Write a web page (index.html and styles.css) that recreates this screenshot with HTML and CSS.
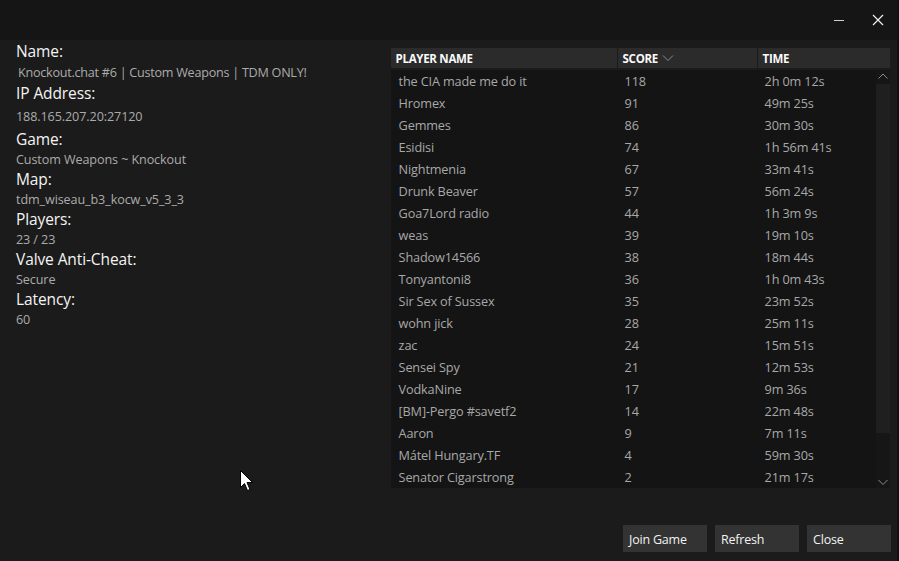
FILE: index.html
```html
<!DOCTYPE html>
<html lang="en">
<head>
    <meta charset="UTF-8" />
    <title>Server Info</title>
    <link rel="stylesheet" href="styles.css">
</head>
<body>

<div class="window">
    <div class="titlebar">
        <span class="tb-btn">
            <svg width="12" height="12" viewBox="0 0 12 12"><path d="M1 6.5h10" stroke="#d0d0d0" stroke-width="1"/></svg>
        </span>
        <span class="tb-btn">
            <svg width="12" height="12" viewBox="0 0 12 12"><path d="M1 1L11 11M11 1L1 11" stroke="#f0f0f0" stroke-width="1.2"/></svg>
        </span>
    </div>

    <div class="content">
        <div class="info">
            <div class="label">Name:</div>
            <div class="value v-name">&nbsp;Knockout.chat #6 | Custom Weapons | TDM ONLY!</div>
            <div class="label">IP Address:</div>
            <div class="value v-ip">188.165.207.20:27120</div>
            <div class="label">Game:</div>
            <div class="value">Custom Weapons ~ Knockout</div>
            <div class="label">Map:</div>
            <div class="value">tdm_wiseau_b3_kocw_v5_3_3</div>
            <div class="label">Players:</div>
            <div class="value">23 / 23</div>
            <div class="label">Valve Anti-Cheat:</div>
            <div class="value">Secure</div>
            <div class="label">Latency:</div>
            <div class="value">60</div>
        </div>

        <div class="players">
            <div class="thead">
                <div class="th c-name">PLAYER NAME</div>
                <div class="th c-score">SCORE
                    <svg class="sort" width="12" height="8" viewBox="0 0 12 8"><path d="M1 1.5L6 6.5L11 1.5" fill="none" stroke="#8a8a8a" stroke-width="1"/></svg>
                </div>
                <div class="th c-time">TIME</div>
            </div>
            <div class="tbody">
                <div class="rows">
                    <div class="row"><span class="c-name">the CIA made me do it</span><span class="c-score">118</span><span class="c-time">2h 0m 12s</span></div>
                    <div class="row"><span class="c-name">Hromex</span><span class="c-score">91</span><span class="c-time">49m 25s</span></div>
                    <div class="row"><span class="c-name">Gemmes</span><span class="c-score">86</span><span class="c-time">30m 30s</span></div>
                    <div class="row"><span class="c-name">Esidisi</span><span class="c-score">74</span><span class="c-time">1h 56m 41s</span></div>
                    <div class="row"><span class="c-name">Nightmenia</span><span class="c-score">67</span><span class="c-time">33m 41s</span></div>
                    <div class="row"><span class="c-name">Drunk Beaver</span><span class="c-score">57</span><span class="c-time">56m 24s</span></div>
                    <div class="row"><span class="c-name">Goa7Lord radio</span><span class="c-score">44</span><span class="c-time">1h 3m 9s</span></div>
                    <div class="row"><span class="c-name">weas</span><span class="c-score">39</span><span class="c-time">19m 10s</span></div>
                    <div class="row"><span class="c-name">Shadow14566</span><span class="c-score">38</span><span class="c-time">18m 44s</span></div>
                    <div class="row"><span class="c-name">Tonyantoni8</span><span class="c-score">36</span><span class="c-time">1h 0m 43s</span></div>
                    <div class="row"><span class="c-name">Sir Sex of Sussex</span><span class="c-score">35</span><span class="c-time">23m 52s</span></div>
                    <div class="row"><span class="c-name">wohn jick</span><span class="c-score">28</span><span class="c-time">25m 11s</span></div>
                    <div class="row"><span class="c-name">zac</span><span class="c-score">24</span><span class="c-time">15m 51s</span></div>
                    <div class="row"><span class="c-name">Sensei Spy</span><span class="c-score">21</span><span class="c-time">12m 53s</span></div>
                    <div class="row"><span class="c-name">VodkaNine</span><span class="c-score">17</span><span class="c-time">9m 36s</span></div>
                    <div class="row"><span class="c-name">[BM]-Pergo #savetf2</span><span class="c-score">14</span><span class="c-time">22m 48s</span></div>
                    <div class="row"><span class="c-name">Aaron</span><span class="c-score">9</span><span class="c-time">7m 11s</span></div>
                    <div class="row"><span class="c-name">Mátel Hungary.TF</span><span class="c-score">4</span><span class="c-time">59m 30s</span></div>
                    <div class="row"><span class="c-name">Senator Cigarstrong</span><span class="c-score">2</span><span class="c-time">21m 17s</span></div>
                </div>
                <div class="scrollbar">
                    <svg class="arrow" width="14" height="12" viewBox="0 0 14 12"><path d="M2.5 8.5L7 4L11.5 8.5" fill="none" stroke="#8a8a8a" stroke-width="1"/></svg>
                    <div class="track"><div class="thumb"></div></div>
                    <svg class="arrow" width="14" height="12" viewBox="0 0 14 12"><path d="M2.5 4L7 8.5L11.5 4" fill="none" stroke="#8a8a8a" stroke-width="1"/></svg>
                </div>
            </div>
        </div>
    </div>

    <div class="actions">
        <button class="btn">Join Game</button>
        <button class="btn">Refresh</button>
        <button class="btn">Close</button>
    </div>

    <svg class="cursor" width="14" height="22" viewBox="0 0 14 22"><path d="M0.5 0.5V17.5L4.5 13.5L7.5 20.5L10 19.5L7 12.5H12.5Z" fill="#ffffff" stroke="#000000" stroke-width="1"/></svg>
</div>

</body>
</html>
```

FILE: styles.css
```css
*{ box-sizing:border-box; }
html, body{ margin:0; padding:0; background:#1b1b1b; }
body{ font-family:"Open Sans", "Noto Sans", sans-serif; color:#e8e8e8; }

.window{ position:relative; width:899px; height:561px; background:#1b1b1b; border-right:2px solid #111; display:flex; flex-direction:column; overflow:hidden; }

.titlebar{ height:40px; background:#151515; display:flex; justify-content:flex-end; align-items:center; padding-right:0; }
.tb-btn{ width:39px; height:40px; display:flex; align-items:center; justify-content:center; }

.content{ display:flex; padding:0 7px 0 16px; height:448px; }

.info{ width:375px; padding-top:1px; }
.label{ font-size:15.5px; line-height:20px; color:#f4f4f4; letter-spacing:-0.1px; }
.value{ font-size:12.6px; line-height:18px; padding-top:2px; color:#ababab; letter-spacing:-0.1px; }
.v-name{ line-height:20px; margin-left:-1px; letter-spacing:-0.25px; }
.v-ip{ line-height:24px; }

.players{ margin-top:8px; width:500px; display:flex; flex-direction:column; }
.thead{ display:flex; height:20px; background:#2b2b2b; }
.th{ font-size:11.5px; font-weight:bold; color:#fafafa; line-height:20px; padding-left:5px; padding-top:1px; letter-spacing:-0.3px; display:flex; align-items:center; }
.th + .th{ border-left:1px solid #1b1b1b; }
.sort{ margin-left:4px; margin-top:-2px; }
.c-name{ width:226px; }
.c-score{ width:140px; }
.c-time{ flex:1; }

.tbody{ display:flex; background:#141414; height:418px; margin-top:2px; }
.rows{ flex:1; }
.row{ display:flex; height:22px; align-items:center; font-size:12.7px; color:#a8a8a8; letter-spacing:-0.15px; }
.row .c-name{ padding-left:8px; }
.row .c-score{ padding-left:8px; }
.row .c-time{ padding-left:8px; }

.scrollbar{ width:14px; display:flex; flex-direction:column; align-items:center; background:#161616; }
.arrow{ flex:none; margin:0; }
.track{ flex:1; width:14px; padding-top:2px; padding-bottom:43px; }
.thumb{ height:100%; background:#1f1f1f; }

.actions{ display:flex; justify-content:flex-end; gap:8px; padding:37px 6px 0 0; }
.btn{ width:84px; height:27px; background:#333333; border:none; color:#f2f2f2; font-family:"Open Sans", "Noto Sans", sans-serif; font-size:12.5px; text-align:left; padding:2px 6px 0 6px; letter-spacing:-0.2px; }

.cursor{ position:absolute; left:240px; top:470px; }
```
